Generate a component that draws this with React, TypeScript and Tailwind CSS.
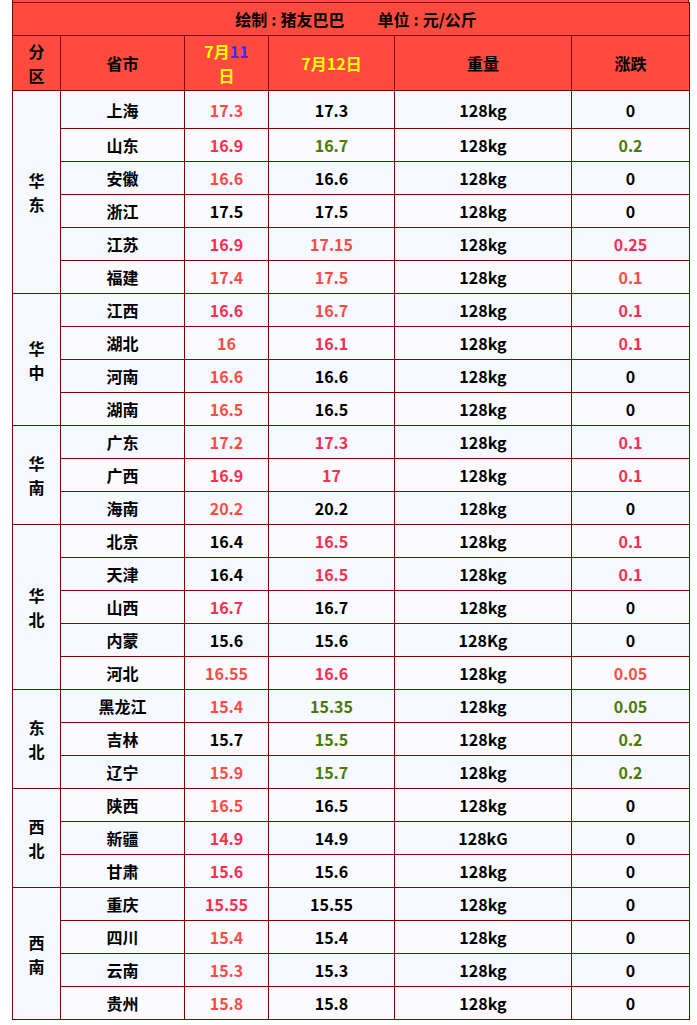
import React from 'react';

type C = 'k' | 'r' | 'p' | 'g';

const COLOR: Record<C, string> = {
  k: 'text-[#000000]',
  r: 'text-[#ff4b45]',
  p: 'text-[#ff2d4f]',
  g: 'text-[#4b7a00]',
};

type Row = [string, string, C, string, C, string, string, C];

const REGIONS: { name: string; rows: Row[] }[] = [
  {
    name: '华东',
    rows: [
      ['上海', '17.3', 'r', '17.3', 'k', '128kg', '0', 'k'],
      ['山东', '16.9', 'p', '16.7', 'g', '128kg', '0.2', 'g'],
      ['安徽', '16.6', 'r', '16.6', 'k', '128kg', '0', 'k'],
      ['浙江', '17.5', 'k', '17.5', 'k', '128kg', '0', 'k'],
      ['江苏', '16.9', 'p', '17.15', 'r', '128kg', '0.25', 'p'],
      ['福建', '17.4', 'r', '17.5', 'r', '128kg', '0.1', 'r'],
    ],
  },
  {
    name: '华中',
    rows: [
      ['江西', '16.6', 'p', '16.7', 'r', '128kg', '0.1', 'p'],
      ['湖北', '16', 'r', '16.1', 'p', '128kg', '0.1', 'p'],
      ['河南', '16.6', 'r', '16.6', 'k', '128kg', '0', 'k'],
      ['湖南', '16.5', 'r', '16.5', 'k', '128kg', '0', 'k'],
    ],
  },
  {
    name: '华南',
    rows: [
      ['广东', '17.2', 'r', '17.3', 'p', '128kg', '0.1', 'p'],
      ['广西', '16.9', 'p', '17', 'p', '128kg', '0.1', 'p'],
      ['海南', '20.2', 'r', '20.2', 'k', '128kg', '0', 'k'],
    ],
  },
  {
    name: '华北',
    rows: [
      ['北京', '16.4', 'k', '16.5', 'p', '128kg', '0.1', 'p'],
      ['天津', '16.4', 'k', '16.5', 'p', '128kg', '0.1', 'p'],
      ['山西', '16.7', 'p', '16.7', 'k', '128kg', '0', 'k'],
      ['内蒙', '15.6', 'k', '15.6', 'k', '128Kg', '0', 'k'],
      ['河北', '16.55', 'r', '16.6', 'p', '128kg', '0.05', 'r'],
    ],
  },
  {
    name: '东北',
    rows: [
      ['黑龙江', '15.4', 'r', '15.35', 'g', '128kg', '0.05', 'g'],
      ['吉林', '15.7', 'k', '15.5', 'g', '128kg', '0.2', 'g'],
      ['辽宁', '15.9', 'r', '15.7', 'g', '128kg', '0.2', 'g'],
    ],
  },
  {
    name: '西北',
    rows: [
      ['陕西', '16.5', 'r', '16.5', 'k', '128kg', '0', 'k'],
      ['新疆', '14.9', 'p', '14.9', 'k', '128kG', '0', 'k'],
      ['甘肃', '15.6', 'p', '15.6', 'k', '128kg', '0', 'k'],
    ],
  },
  {
    name: '西南',
    rows: [
      ['重庆', '15.55', 'p', '15.55', 'k', '128kg', '0', 'k'],
      ['四川', '15.4', 'r', '15.4', 'k', '128kg', '0', 'k'],
      ['云南', '15.3', 'r', '15.3', 'k', '128kg', '0', 'k'],
      ['贵州', '15.8', 'r', '15.8', 'k', '128kg', '0', 'k'],
    ],
  },
];

const cell = 'border border-[#800000] text-center align-middle p-0';

function Label({ k, v }: { k: string; v: string }) {
  return (
    <span>
      {k}
      <span className="mx-[4px]">:</span>
      {v}
    </span>
  );
}

export default function App() {
  let idx = 0;
  return (
    <div
      className="bg-white min-h-screen pl-[12px] text-[16px] font-bold leading-[24px] text-black"
      style={{ fontFamily: '"Microsoft YaHei", "Noto Sans CJK SC", sans-serif' }}
    >
      <div className="w-[677px] h-[2px] bg-[#ff4b3f] border-x border-[#800000]" />
      <table className="w-[677px] table-fixed border-collapse">
        <colgroup>
          <col className="w-[48px]" />
          <col className="w-[124px]" />
          <col className="w-[84px]" />
          <col className="w-[126px]" />
          <col className="w-[177px]" />
          <col className="w-[118px]" />
        </colgroup>
        <thead>
          <tr className="h-[33px] bg-[#ff4b3f]">
            <th colSpan={6} className={`${cell} font-bold`}>
              <div className="flex justify-center gap-[33px] pl-[10px]">
                <Label k="绘制" v="猪友巴巴" />
                <Label k="单位" v="元/公斤" />
              </div>
            </th>
          </tr>
          <tr className="h-[55px] bg-[#ff4b3f]">
            <th className={`${cell} font-bold`}>
              分<br />区
            </th>
            <th className={`${cell} font-bold`}>省市</th>
            <th className={`${cell} font-bold text-[#ffff00]`}>
              7月<span className="text-[#3030ff]">11</span>
              <br />日
            </th>
            <th className={`${cell} font-bold text-[#ffff00]`}>7月12日</th>
            <th className={`${cell} font-bold`}>重量</th>
            <th className={`${cell} font-bold`}>涨跌</th>
          </tr>
        </thead>
        <tbody>
          {REGIONS.map((region) =>
            region.rows.map((r, i) => {
              const bg = idx++ % 2 === 0 ? 'bg-[#f5f9ff]' : 'bg-[#fbfbfe]';
              const h = idx === 1 ? 'h-[38px]' : 'h-[33px]';
              return (
                <tr key={r[0]} className={`${h} ${bg}`}>
                  {i === 0 && (
                    <td rowSpan={region.rows.length} className={`${cell} bg-[#f5f9ff]`}>
                      {region.name[0]}
                      <br />
                      {region.name[1]}
                    </td>
                  )}
                  <td className={cell}>{r[0]}</td>
                  <td className={`${cell} ${COLOR[r[2]]}`}>{r[1]}</td>
                  <td className={`${cell} ${COLOR[r[4]]}`}>{r[3]}</td>
                  <td className={cell}>{r[5]}</td>
                  <td className={`${cell} ${COLOR[r[7]]}`}>{r[6]}</td>
                </tr>
              );
            })
          )}
        </tbody>
      </table>
    </div>
  );
}
